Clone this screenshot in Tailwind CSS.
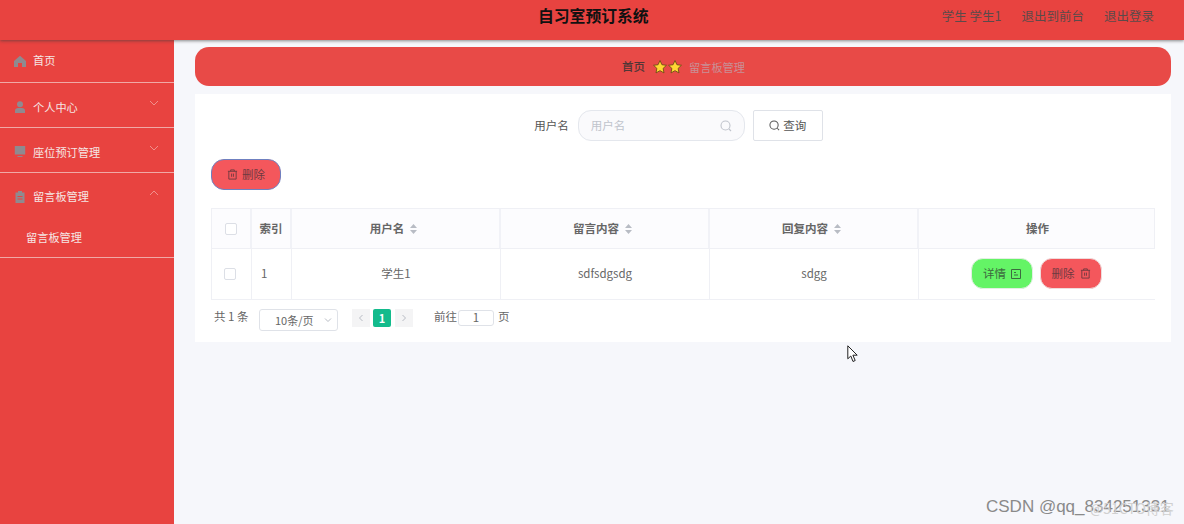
<!DOCTYPE html>
<html lang="zh">
<head>
<meta charset="utf-8">
<title>自习室预订系统</title>
<script src="https://cdn.jsdelivr.net/npm/@tailwindcss/browser@4"></script>
</head>
<body class="relative w-[1184px] h-[524px] overflow-hidden bg-[#f6f7fb] font-['Noto_Sans_CJK_SC','Noto_Sans',sans-serif] text-[11.5px] text-[#606266]">

<!-- Header -->
<header class="relative z-10 h-10 bg-[#e84340] shadow-[0_1px_3px_rgba(60,60,60,0.6)] flex items-center">
    <h1 class="absolute left-[538px] top-[5px] text-[15.8px] leading-[22px] font-bold text-[#111]">自习室预订系统</h1>
    <div class="ml-auto mr-[30px] mb-[8px] flex gap-5 text-[12.5px] text-[#5b4a4a]">
        <span>学生 学生1</span>
        <span>退出到前台</span>
        <span>退出登录</span>
    </div>
</header>

<div class="flex h-[484px]">
    <!-- Sidebar -->
    <aside class="w-[174px] shrink-0 bg-[#e84340] text-[#f5e6e4] text-[11.2px]">
        <div class="h-[43px] border-b border-[#f0a9a6] flex items-center pl-[14px] pb-[1px]">
            <svg class="w-3 h-3 mr-[7px] text-[#8f8a90]" viewBox="0 0 12 12" fill="currentColor"><path d="M6 .8 12 6v6H8V8H4v4H0V6z"/></svg>
            <span>首页</span>
        </div>
        <div class="h-[45px] border-b border-[#f0a9a6] flex items-center pl-[14px] pt-[4px]">
            <svg class="w-3 h-3 mr-[7px] text-[#8f8a90]" viewBox="0 0 12 12" fill="currentColor"><circle cx="6" cy="3.2" r="3"/><path d="M1 12V9.5C1 8 2.500 7 4 7h4c1.500 0 3 1 3 2.500V12z"/></svg>
            <span>个人中心</span>
            <svg class="w-[10px] h-[10px] ml-auto mr-[15px] mb-[9px] text-[#f0908c]" viewBox="0 0 10 10" fill="none" stroke="currentColor"><path d="m1 3 4 4 4-4"/></svg>
        </div>
        <div class="h-[45px] border-b border-[#f0a9a6] flex items-center pl-[14px] pt-[4px]">
            <svg class="w-3 h-3 mr-[7px] text-[#8f8a90]" viewBox="0 0 12 12" fill="currentColor"><path d="M.8 0h10.400v8.500H.8zM3.500 10h5v1h-5z"/></svg>
            <span>座位预订管理</span>
            <svg class="w-[10px] h-[10px] ml-auto mr-[15px] mb-[9px] text-[#f0908c]" viewBox="0 0 10 10" fill="none" stroke="currentColor"><path d="m1 3 4 4 4-4"/></svg>
        </div>
        <div class="h-[45px] flex items-center pl-[14px] pt-[2px]">
            <svg class="w-3 h-3 mr-[7px] text-[#8f8a90]" viewBox="0 0 12 12" fill="currentColor" fill-rule="evenodd"><path d="M1.500 1.500H4V0h4v1.500h2.500V12h-9zM3.500 5v1h5V5zm0 2.500v1h5v-1z"/></svg>
            <span>留言板管理</span>
            <svg class="w-[10px] h-[10px] ml-auto mr-[15px] mb-[7px] text-[#f0908c]" viewBox="0 0 10 10" fill="none" stroke="currentColor"><path d="m1 7 4-4 4 4"/></svg>
        </div>
        <div class="h-[40px] border-b border-[#f0a9a6] flex items-center pl-[26px] pb-[1px]">留言板管理</div>
    </aside>

    <!-- Main -->
    <main class="w-[976px] ml-[21px] pt-[7px]">
        <div class="h-[39px] rounded-[14px] bg-[#e84a47] flex items-center pl-[427px] pt-[1px]">
            <span class="text-[#4f3636] font-medium">首页</span>
            <span class="ml-[8px] flex gap-[1px]">
                <svg class="w-[14px] h-[14px]" viewBox="0.500 0.500 13 13" fill="#ffd633" stroke="#6b4a14" stroke-width="0.800"><path d="m7 1 1.800 3.900 4.200.5-3.100 2.900.8 4.200L7 10.400l-3.700 2.100.8-4.200L1 5.400l4.200-.5z"/></svg>
                <svg class="w-[14px] h-[14px]" viewBox="0.500 0.500 13 13" fill="#ffd633" stroke="#6b4a14" stroke-width="0.800"><path d="m7 1 1.800 3.900 4.200.5-3.100 2.900.8 4.200L7 10.400l-3.700 2.100.8-4.200L1 5.400l4.200-.5z"/></svg>
            </span>
            <span class="ml-[7px] text-[11.2px] text-[#c98f96]">留言板管理</span>
        </div>

        <section class="mt-[8px] h-[248px] bg-white px-4 pt-4">
            <!-- Search -->
            <div class="flex items-center justify-center h-[31px] pr-[9px]">
                <span class="text-[#555]">用户名</span>
                <div class="ml-[9px] w-[167px] h-[31px] rounded-[13px] border border-[#e4e7ed] bg-[#fafafc] flex items-center px-3 text-[#c0c4cc]">
                    用户名
                    <svg class="ml-auto w-3 h-3" viewBox="0 0 12 12" fill="none" stroke="currentColor" stroke-width="1.100"><circle cx="5.500" cy="5.500" r="4.500"/><path d="m9 9 2 2"/></svg>
                </div>
                <button class="ml-[8px] w-[70px] h-[31px] rounded-[2px] border border-[#dfe2e8] bg-white flex items-center justify-center gap-[3px] text-[#555]">
                    <svg class="w-[11px] h-[11px]" viewBox="0 0 12 12" fill="none" stroke="currentColor" stroke-width="1.100"><circle cx="5.500" cy="5.500" r="4.500"/><path d="m9 9 2 2"/></svg>
                    查询
                </button>
            </div>

            <button class="mt-[18px] w-[70px] h-[31px] rounded-[13px] border border-[#6f80c0] bg-[#f4575c] flex items-center justify-center gap-[4px] text-[#6e3a40]">
                <svg class="w-[11px] h-[11px]" viewBox="0 0 12 12" fill="none" stroke="currentColor"><path d="M1 2.500h10M4 2.500V1h4v1.500M2 2.500V11h8V2.500M5 5v3.500M7 5v3.500"/></svg>
                删除
            </button>

            <!-- Table -->
            <div class="mt-[18px] w-[944px]">
                <div class="grid grid-cols-[40px_40px_209px_209px_209px_237px] h-[41px] bg-[#fcfcfe] border border-[#eff0f5] font-bold text-[#666] text-center items-stretch">
                    <div class="flex items-center justify-center border-r-2 border-[#f1f2f7]"><span class="w-[12px] h-[12px] border border-[#dcdfe6] rounded-[2px] bg-white"></span></div>
                    <div class="flex items-center justify-center border-r-2 border-[#f1f2f7]">索引</div>
                    <div class="flex items-center justify-center border-r-2 border-[#f1f2f7] pr-[4px]">用户名
                        <svg class="w-[7px] h-[10px] ml-[6px] text-[#b8bcc4]" viewBox="0 0 7 10" fill="currentColor"><path d="M3.500 0 7 4H0zM0 6h7l-3.500 4z"/></svg>
                    </div>
                    <div class="flex items-center justify-center border-r-2 border-[#f1f2f7] pr-[4px]">留言内容
                        <svg class="w-[7px] h-[10px] ml-[6px] text-[#b8bcc4]" viewBox="0 0 7 10" fill="currentColor"><path d="M3.500 0 7 4H0zM0 6h7l-3.500 4z"/></svg>
                    </div>
                    <div class="flex items-center justify-center border-r-2 border-[#f1f2f7] pr-[4px]">回复内容
                        <svg class="w-[7px] h-[10px] ml-[6px] text-[#b8bcc4]" viewBox="0 0 7 10" fill="currentColor"><path d="M3.500 0 7 4H0zM0 6h7l-3.500 4z"/></svg>
                    </div>
                    <div class="flex items-center justify-center">操作</div>
                </div>
                <div class="grid grid-cols-[40px_40px_209px_209px_209px_237px] h-[51px] border-l border-b border-[#eff0f5] text-center items-stretch text-[#666]">
                    <div class="flex items-center justify-center border-r border-[#eff0f5] pr-[3px]"><span class="w-[12px] h-[12px] border border-[#dcdfe6] rounded-[2px] bg-white"></span></div>
                    <div class="flex items-center pl-[9px] border-r border-[#eff0f5]">1</div>
                    <div class="flex items-center justify-center border-r border-[#eff0f5]">学生1</div>
                    <div class="flex items-center justify-center border-r border-[#eff0f5]">sdfsdgsdg</div>
                    <div class="flex items-center justify-center border-r border-[#eff0f5]">sdgg</div>
                    <div class="flex items-center pl-[52px] gap-[7px] pb-[1px]">
                        <button class="w-[62px] h-[31px] rounded-[12px] border border-[#e3efe3] bg-[#64f466] flex items-center justify-center gap-[5px] text-[#3d6b40]">
                            详情
                            <svg class="w-[10px] h-[10px]" viewBox="0 0 10 10" fill="none" stroke="currentColor"><path d="M.5.5h9v9h-9zM3 3.500h2M3 6h4"/></svg>
                        </button>
                        <button class="w-[62px] h-[31px] rounded-[12px] border border-[#efdcdc] bg-[#f4575c] flex items-center justify-center gap-[5px] text-[#6e3a40]">
                            删除
                            <svg class="w-[11px] h-[11px]" viewBox="0 0 12 12" fill="none" stroke="currentColor"><path d="M1 2.500h10M4 2.500V1h4v1.500M2 2.500V11h8V2.500M5 5v3.500M7 5v3.500"/></svg>
                        </button>
                    </div>
                </div>
            </div>

            <!-- Pagination -->
            <div class="mt-[8px] flex items-start h-[24px] text-[#666]">
                <span class="ml-[3px] w-[34px] whitespace-nowrap">共 1 条</span>
                <div class="ml-[11px] w-[79px] h-[22px] mt-[1px] border border-[#dfe2e8] rounded-[3px] flex items-center pl-[15px] text-[11px]">
                    10条/页
                    <svg class="ml-auto mr-[5px] w-2 h-2 text-[#b8bcc4]" viewBox="0 0 8 8" fill="none" stroke="currentColor"><path d="m1 2.500 3 3 3-3"/></svg>
                </div>
                <span class="ml-[14px] mt-[1px] w-[18px] h-[18px] bg-[#f4f4f5] flex items-center justify-center text-[#b8bcc4]">
                    <svg class="w-2 h-2" viewBox="0 0 8 8" fill="none" stroke="currentColor"><path d="M5.500 1 2.500 4l3 3"/></svg>
                </span>
                <span class="ml-[3px] mt-[1px] w-[18px] h-[18px] rounded-[2px] bg-[#13bb8c] text-white font-bold text-[11px] flex items-center justify-center">1</span>
                <span class="ml-[4px] mt-[1px] w-[18px] h-[18px] bg-[#f4f4f5] flex items-center justify-center text-[#b8bcc4]">
                    <svg class="w-2 h-2" viewBox="0 0 8 8" fill="none" stroke="currentColor"><path d="m2.500 1 3 3-3 3"/></svg>
                </span>
                <span class="ml-[21px]">前往</span>
                <span class="ml-[1px] mt-[2px] w-[36px] h-[16px] border border-[#dfe2e8] rounded-[3px] flex items-center justify-center">1</span>
                <span class="ml-[4px]">页</span>
            </div>
        </section>
    </main>
</div>

<!-- Mouse pointer -->
<svg class="absolute left-[847px] top-[345px] w-[12px] h-[18px]" viewBox="0 0 12 18" fill="white" stroke="#222" stroke-width="1"><path d="M.8.8v13l3-2.800 2.200 5.500 2.200-1-2.300-5.300h4.300z"/></svg>

<!-- Watermark -->
<span class="absolute left-[986px] top-[496px] text-[17px] leading-[22px] text-[#8a8a8a] font-['Liberation_Sans',sans-serif]">CSDN @qq_834251331</span>
<span class="absolute left-[1090px] top-[498px] text-[14px] leading-[20px] text-[#d0d0d0]">@51CTO博客</span>
</body>
</html>
